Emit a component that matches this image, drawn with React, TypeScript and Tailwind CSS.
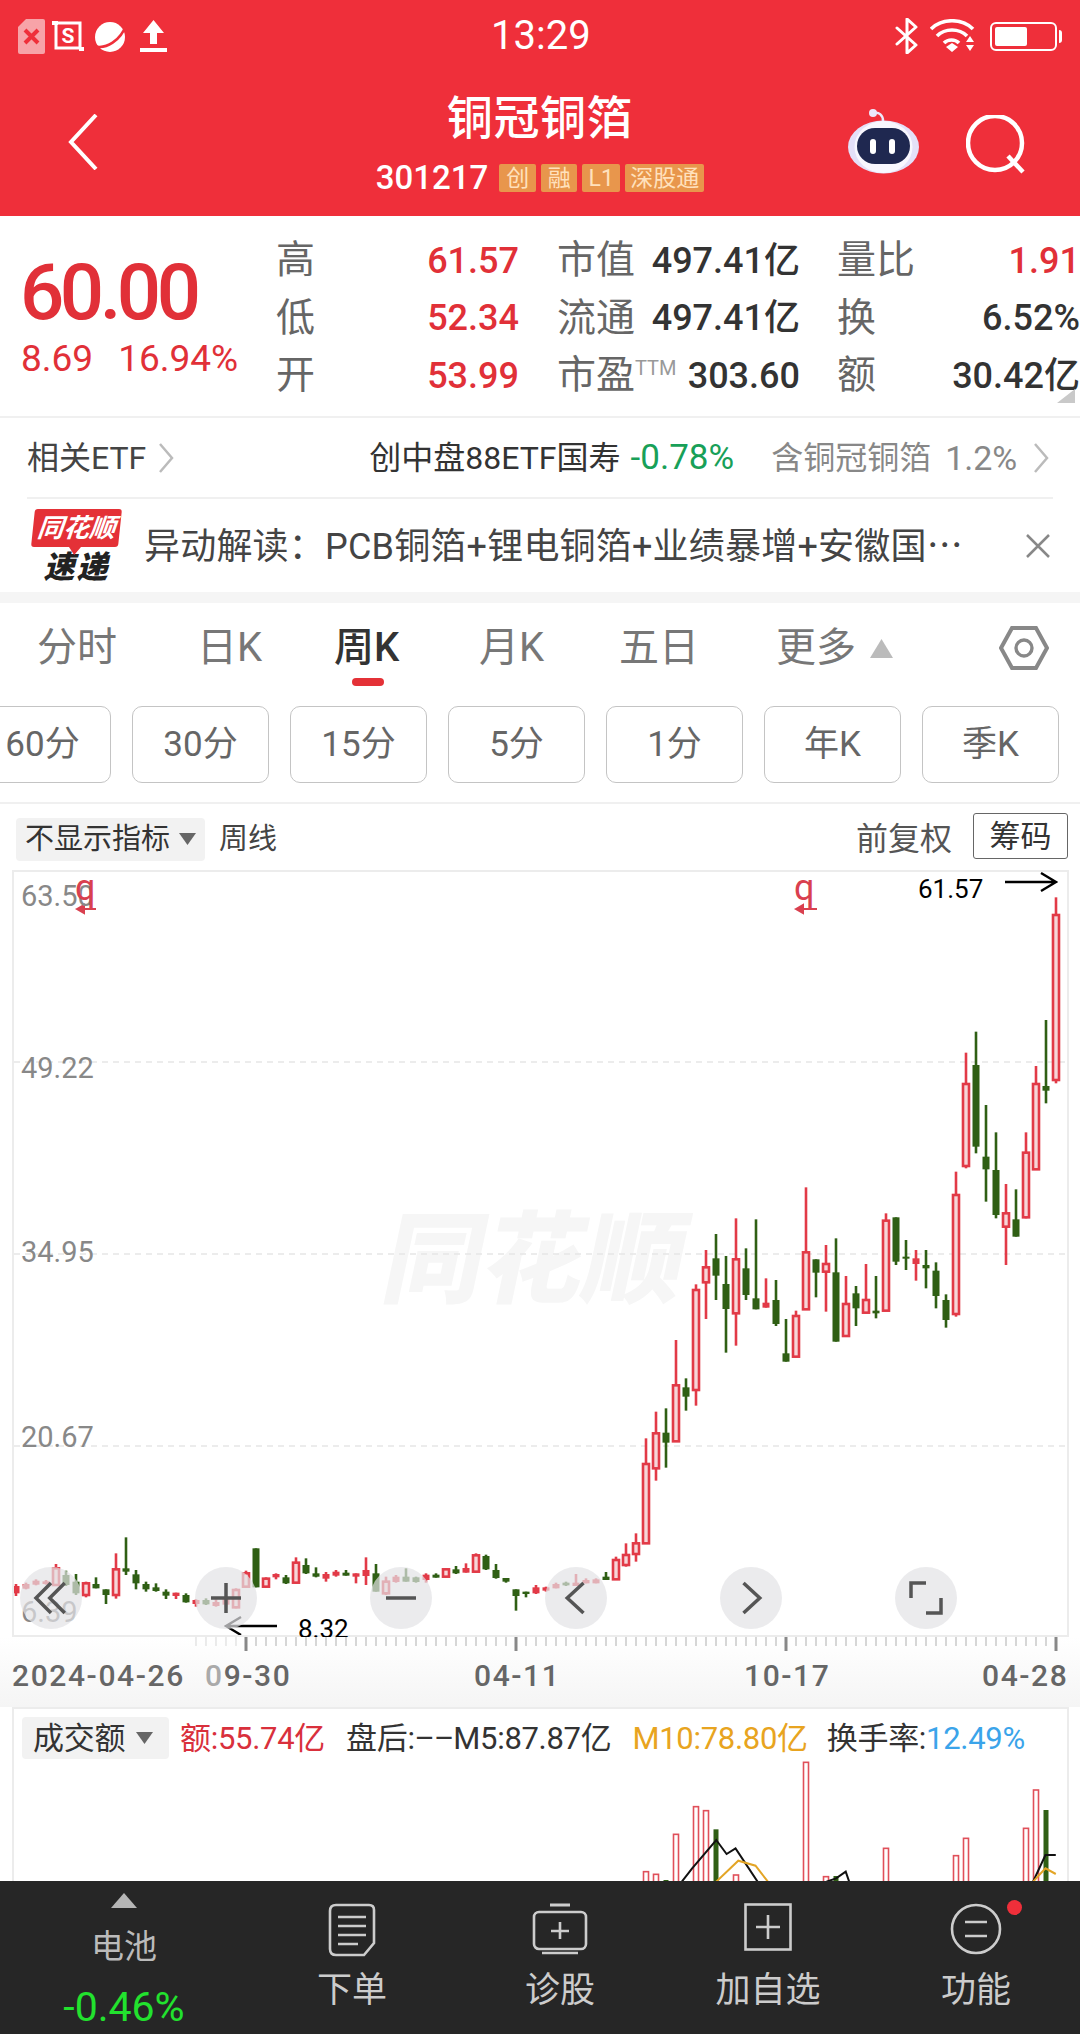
const sans = "font-[Roboto,'Noto_Sans_CJK_SC',sans-serif]";

// [high, bodyTop, bodyBottom, low, kind] r = hollow red, f = filled red, g = green
type Candle = [number, number, number, number, string];

// measured against y = 1480 + v / 3
const leftCandles: Candle[] = [
  [312, 318, 340, 348, "f"], [308, 312, 326, 328, "f"], [298, 302, 314, 316, "f"], [300, 304, 312, 314, "f"],
  [252, 265, 315, 318, "r"], [272, 285, 315, 318, "g"], [282, 305, 340, 345, "g"], [305, 310, 345, 352, "r"],
  [292, 312, 325, 325, "g"], [328, 328, 345, 372, "g"], [220, 268, 345, 356, "r"], [172, 265, 275, 285, "g"],
  [270, 283, 310, 328, "g"], [305, 312, 328, 335, "g"], [310, 322, 333, 335, "g"], [328, 335, 347, 357, "g"],
  [338, 338, 348, 357, "f"], [340, 345, 367, 368, "g"], [358, 360, 372, 380, "f"], [355, 360, 373, 375, "g"],
  [358, 366, 378, 380, "f"], [352, 356, 374, 380, "f"], [325, 330, 382, 385, "r"], [272, 280, 320, 322, "r"],
  [205, 205, 322, 322, "g"], [292, 296, 320, 322, "r"], [280, 282, 292, 298, "f"], [285, 292, 310, 312, "g"],
  [232, 248, 308, 310, "r"], [235, 255, 280, 282, "g"], [262, 280, 290, 292, "g"], [276, 282, 296, 305, "f"],
  [270, 275, 287, 290, "f"], [270, 278, 287, 287, "g"], [280, 280, 290, 310, "f"], [232, 270, 288, 315, "f"],
  [252, 280, 335, 335, "g"], [290, 305, 340, 345, "r"], [285, 290, 306, 308, "f"], [265, 290, 305, 305, "g"],
  [290, 292, 306, 308, "g"], [280, 284, 300, 308, "f"], [280, 284, 293, 293, "g"], [265, 268, 290, 292, "r"],
  [258, 268, 280, 282, "g"], [250, 264, 278, 278, "f"], [220, 226, 275, 278, "r"], [224, 228, 268, 270, "g"],
  [252, 270, 294, 296, "g"], [294, 294, 305, 308, "g"], [328, 328, 348, 392, "g"], [335, 335, 342, 352, "g"],
  [315, 322, 340, 342, "f"], [320, 322, 332, 335, "f"], [308, 312, 325, 325, "f"], [305, 308, 316, 318, "g"],
  [282, 308, 318, 318, "f"], [295, 300, 310, 310, "f"], [295, 298, 310, 310, "f"],
];

// measured against y = 1240 + v / 3
const rightCandles: Candle[] = [
  [996, 1010, 1020, 1020, "g"], [950, 960, 1018, 1018, "r"], [910, 945, 975, 980, "r"], [880, 910, 942, 965, "r"],
  [595, 672, 910, 910, "r"], [515, 580, 685, 722, "r"], [505, 578, 608, 683, "g"], [300, 436, 604, 604, "r"],
  [415, 442, 470, 512, "g"], [133, 150, 450, 497, "r"], [30, 82, 127, 237, "r"], [-18, 55, 107, 180, "g"],
  [48, 132, 207, 338, "g"], [-65, 58, 220, 317, "r"], [25, 85, 165, 180, "g"], [-62, 175, 208, 208, "g"],
  [115, 188, 203, 203, "f"], [120, 180, 252, 258, "g"], [237, 340, 365, 365, "g"], [212, 228, 350, 352, "r"],
  [-158, 37, 208, 208, "r"], [58, 58, 98, 172, "g"], [15, 72, 95, 215, "r"], [-5, 97, 305, 305, "g"],
  [108, 192, 288, 288, "r"], [138, 160, 205, 258, "g"], [72, 180, 218, 218, "r"], [108, 212, 220, 235, "g"],
  [-80, -58, 212, 212, "r"], [-68, -68, 65, 75, "g"], [0, 50, 56, 90, "g"], [30, 55, 72, 122, "f"],
  [30, 75, 85, 145, "g"], [67, 92, 168, 205, "g"], [163, 180, 240, 263, "g"], [-205, -135, 222, 230, "r"],
  [-562, -468, -222, -215, "r"], [-625, -525, -280, -260, "g"], [-405, -250, -212, -115, "g"], [-323, -210, -75, -65, "g"],
  [-168, -80, -40, 75, "r"], [-152, -62, -10, -10, "g"], [-323, -262, -68, -65, "r"], [-522, -468, -212, -212, "r"],
  [-660, -462, -448, -410, "g"], [-1028, -975, -480, -470, "r"],
];

const RED = "#e23a47";
const GREEN = "#2f5f14";

function CandleMark({ x, c, base }: { x: number; c: Candle; base: number }) {
  const [h, t, b, l, kind] = c;
  const y = (v: number) => base + v / 3;
  const color = kind === "g" ? GREEN : RED;
  return (
    <g>
      <line x1={x} x2={x} y1={y(h)} y2={y(l)} stroke={color} strokeWidth={2.6} />
      {kind === "r" ? (
        <rect x={x - 3} y={y(t)} width={6} height={Math.max(y(b) - y(t), 2)} fill="#f7d5d8" stroke={color} strokeWidth={2.6} />
      ) : (
        <rect x={x - 3.5} y={y(t)} width={7} height={Math.max(y(b) - y(t), 2)} fill={color} />
      )}
    </g>
  );
}

const volBars: [number, number, string][] = [
  [646, 515, "r"], [656, 523, "r"], [666, 540, "g"], [676, 403, "r"], [696, 320, "r"], [706, 332, "r"],
  [716, 388, "g"], [736, 525, "r"], [806, 187, "r"], [826, 530, "r"], [836, 528, "g"], [886, 445, "r"],
  [956, 467, "r"], [966, 415, "r"], [1026, 385, "r"], [1036, 270, "r"], [1046, 330, "g"],
];

function zy(v: number) {
  return 1700 + v / 3;
}
function pts(list: [number, number][]) {
  return list.map(([x, y]) => `${x / 1.452},${zy(y)}`).join(" ");
}

function Tri({ up, className }: { up?: boolean; className: string }) {
  return (
    <svg viewBox="0 0 20 16" preserveAspectRatio="none" className={className}>
      <polygon points={up ? "10,0 20,16 0,16" : "0,0 20,0 10,16"} fill="currentColor" />
    </svg>
  );
}

function StatusBar() {
  return (
    <div className="flex h-[72px] items-center text-white">
      <svg viewBox="0 0 27 35" className="ml-[18px] h-[35px] w-[27px]">
        <path d="M8 0h17q2 0 2 2v31q0 2-2 2H2q-2 0-2-2V8z" fill="#f7a3a8" />
        <path d="M7 11l13 13M20 11L7 24" stroke="#ef2f3a" strokeWidth="4" />
      </svg>
      <svg viewBox="0 0 32 34" className="ml-[7px] h-[34px] w-[32px]">
        <path d="M4 4h24v25H4z" fill="none" stroke="#fff" strokeWidth="3" />
        <path d="M0 2h6v4H0zM27 28h5v4h-5z" fill="#fff" />
        <text x="16" y="24" textAnchor="middle" fontSize="21" fontWeight="700" fill="#fff" fontFamily="Roboto">S</text>
      </svg>
      <svg viewBox="0 0 35 35" className="ml-[9px] h-[35px] w-[35px]">
        <circle cx="17" cy="18" r="15" fill="#fff" />
        <path d="M1 27c12 4 27-6 32-21" fill="none" stroke="#ef2f3a" strokeWidth="2.5" />
      </svg>
      <svg viewBox="0 0 27 32" className="ml-[12px] h-[32px] w-[27px]">
        <path d="M13.5 0L24 13h-7v11h-7V13H3zM0 28h27v4H0z" fill="#fff" />
      </svg>
      <div className="ml-[324px] w-[98px] text-center text-[40px] leading-none">13:29</div>
      <svg viewBox="0 0 24 36" className="ml-[306px] h-[36px] w-[24px]">
        <path d="M2 10l19 17-9 8V1l9 8L2 26" fill="none" stroke="#fff" strokeWidth="3" strokeLinecap="round" strokeLinejoin="round" />
      </svg>
      <svg viewBox="0 0 46 34" className="ml-[11px] h-[34px] w-[46px]">
        <path d="M1 10c11-11 31-11 42 0M7 17c8-8 22-8 30 0M14 24c4-4 11-4 15 0" fill="none" stroke="#fff" strokeWidth="3.6" />
        <path d="M16 28l6-4 6 4-6 5zM40 17l4 6h-8zM40 32l4-6h-8z" fill="#fff" />
      </svg>
      <div className="ml-[14px] flex h-[29px] w-[67px] items-center rounded-[6px] border-2 border-white p-[3px]">
        <div className="h-full w-[32px] rounded-[2px] bg-white" />
      </div>
      <div className="ml-[2px] h-[13px] w-[3px] rounded-r-sm bg-white" />
    </div>
  );
}

function Badge({ label, w }: { label: string; w: string }) {
  return (
    <span className={`flex h-[28px] items-center justify-center rounded-[2px] bg-[#e8964c] text-[23px] leading-none text-[#ffe1bd] ${w}`}>
      {label}
    </span>
  );
}

function Header() {
  return (
    <div className="h-[216px] bg-[#ef2f3a] text-white">
      <StatusBar />
      <div className="flex h-[144px]">
        <div className="w-[340px] pl-[68px]">
          <svg viewBox="0 0 30 56" className="mt-[42px] h-[56px] w-[30px]">
            <path d="M28 1L3 28l25 27" fill="none" stroke="#fff" strokeWidth="4" />
          </svg>
        </div>
        <div className="flex w-[400px] flex-col items-center pt-[19px]">
          <div className="text-[46px] leading-[54px] font-medium tracking-[0.6px]">铜冠铜箔</div>
          <div className="mt-[18px] flex items-center gap-[5px]">
            <span className="mr-[6px] text-[33px] leading-[30px] font-medium">301217</span>
            <Badge label="创" w="w-[37px]" />
            <Badge label="融" w="w-[36px]" />
            <Badge label="L1" w="w-[38px]" />
            <Badge label="深股通" w="w-[79px]" />
          </div>
        </div>
        <svg viewBox="0 0 74 66" className="ml-[107px] mt-[36px] h-[66px] w-[74px]">
          <path d="M27 5c5-1 9 2 9 8" fill="none" stroke="#ece8fb" strokeWidth="2.5" />
          <circle cx="26" cy="5" r="4" fill="#ece8fb" />
          <ellipse cx="36.5" cy="39" rx="35.5" ry="26.5" fill="#e4e0f8" />
          <ellipse cx="36.5" cy="39" rx="29" ry="26" fill="#f8f7fe" />
          <rect x="10" y="20" width="53" height="36" rx="18" fill="#1f2850" />
          <rect x="23" y="31" width="6" height="15" rx="3" fill="#fff" />
          <rect x="42" y="31" width="6" height="15" rx="3" fill="#fff" />
        </svg>
        <svg viewBox="0 0 62 60" className="ml-[45px] mt-[43px] h-[60px] w-[62px]">
          <circle cx="29" cy="28" r="27" fill="none" stroke="#fff" strokeWidth="4.5" />
          <path d="M42 41l15 16" stroke="#fff" strokeWidth="4.5" />
        </svg>
      </div>
    </div>
  );
}

function Stat({ label, value, valueClass }: { label: React.ReactNode; value: string; valueClass: string }) {
  return (
    <div className="flex h-[57.5px] items-center justify-between">
      <span className="text-[39px] leading-none text-[#666]">{label}</span>
      <span className={`text-[36px] leading-none font-medium ${valueClass}`}>{value}</span>
    </div>
  );
}

function Quote() {
  return (
    <div className="relative flex h-[202px] border-b-2 border-[#f0f0f0] pt-[16px]">
      <div className="w-[276px] shrink-0 pl-[20px] pt-[26px] text-[#e13038]">
        <div className="text-[78px] leading-[70px] font-medium tracking-[-4.5px]">60.00</div>
        <div className="mt-[12px] ml-[1px] flex gap-[25px] text-[37px] leading-none">
          <span>8.69</span>
          <span>16.94%</span>
        </div>
      </div>
      <div className="w-[243px] shrink-0">
        <Stat label="高" value="61.57" valueClass="text-[#e13038]" />
        <Stat label="低" value="52.34" valueClass="text-[#e13038]" />
        <Stat label="开" value="53.99" valueClass="text-[#e13038]" />
      </div>
      <div className="ml-[38px] w-[243px] shrink-0">
        <Stat label="市值" value="497.41亿" valueClass="text-[#333]" />
        <Stat label="流通" value="497.41亿" valueClass="text-[#333]" />
        <Stat
          label={
            <span className="flex items-start">
              市盈<span className="mt-[2px] text-[20px] leading-none text-[#999]">TTM</span>
            </span>
          }
          value="303.60"
          valueClass="text-[#333]"
        />
      </div>
      <div className="ml-[37px] w-[243px] shrink-0">
        <Stat label="量比" value="1.91" valueClass="text-[#e13038]" />
        <Stat label="换" value="6.52%" valueClass="text-[#333]" />
        <Stat label="额" value="30.42亿" valueClass="text-[#333]" />
      </div>
      <div className="absolute right-[5px] bottom-[13px] h-0 w-0 border-b-[14px] border-l-[18px] border-b-[#c9c9c9] border-l-transparent" />
    </div>
  );
}

function Chevron({ className }: { className: string }) {
  return (
    <svg viewBox="0 0 16 30" className={className}>
      <path d="M2 1l12 14L2 29" fill="none" stroke="#bbb" strokeWidth="2.5" />
    </svg>
  );
}

function EtfRow() {
  return (
    <div className="mx-[27px] flex h-[81px] items-center border-b-2 border-[#f0f0f0] text-[32px] leading-none">
      <span className="text-[#444]">相关ETF</span>
      <Chevron className="ml-[12px] h-[30px] w-[16px]" />
      <span className="ml-[195px] text-[#333]">创中盘88ETF国寿</span>
      <span className="ml-[10px] text-[35px] text-[#18a058]">-0.78%</span>
      <span className="ml-[37px] text-[#888]">含铜冠铜箔</span>
      <span className="ml-[14px] text-[34px] text-[#888]">1.2%</span>
      <Chevron className="ml-[16px] h-[30px] w-[16px]" />
    </div>
  );
}

function NewsRow() {
  return (
    <div className="flex h-[93px] items-center">
      <div className="ml-[33px] w-[87px] shrink-0 text-center italic">
        <div className="relative mb-[6px] flex h-[38px] -skew-x-6 items-center justify-center rounded-[3px] bg-[#e43137] text-[26px] leading-none font-bold text-white">
          同花顺
          <span className="absolute -bottom-[8px] left-[38px] h-0 w-0 border-x-[6px] border-t-[8px] border-x-transparent border-t-[#e43137]" />
        </div>
        <div className="text-[31px] leading-[30px] font-black tracking-[2px] text-[#222]">速递</div>
      </div>
      <div className="ml-[24px] w-[826px] shrink-0 pt-[2px] text-[36px] leading-none tracking-[0.2px] whitespace-nowrap text-[#444]">
        异动解读：PCB铜箔+锂电铜箔+业绩暴增+安徽国⋯
      </div>
      <svg viewBox="0 0 24 24" className="ml-[56px] h-[24px] w-[24px]">
        <path d="M1 1l22 22M23 1L1 23" stroke="#888" strokeWidth="2.5" />
      </svg>
    </div>
  );
}

function Tabs() {
  return (
    <div className="flex h-[92px] items-center pl-[37px] pb-[2px] text-[40px] leading-none text-[#777]">
      <span className="w-[160px]">分时</span>
      <span className="w-[137px]">日K</span>
      <span className="relative w-[145px] font-medium text-[#333]">
        周K
        <span className="absolute top-[50px] left-[18px] h-[8px] w-[32px] rounded-full bg-[#e43137]" />
      </span>
      <span className="w-[140px]">月K</span>
      <span className="w-[157px]">五日</span>
      <span>更多</span>
      <Tri up className="ml-[14px] h-[19px] w-[23px] text-[#bbb]" />
      <svg viewBox="0 0 50 46" className="ml-[106px] h-[46px] w-[50px]">
        <path d="M2 23L13 3h24l11 20-11 20H13z" fill="none" stroke="#888" strokeWidth="4" />
        <circle cx="25" cy="23" r="8" fill="none" stroke="#888" strokeWidth="3.4" />
      </svg>
    </div>
  );
}

function PeriodButtons() {
  const labels = ["60分", "30分", "15分", "5分", "1分", "年K", "季K"];
  return (
    <div className="mt-[11px] -ml-[26px] flex gap-[21px]">
      {labels.map((label) => (
        <div
          key={label}
          className="flex h-[77px] w-[137px] shrink-0 items-center justify-center rounded-[10px] border border-[#c4c4c4] text-[35px] leading-none text-[#666]"
        >
          {label}
        </div>
      ))}
    </div>
  );
}

function ChartToolbar() {
  return (
    <div className="mt-[19px] flex h-[68px] items-center border-t-2 border-[#f0f0f0] pt-[4px] pl-[16px]">
      <div className="flex h-[43px] w-[189px] items-center rounded-[4px] bg-[#f2f2f2] pl-[9px] text-[29px] leading-none text-[#333]">
        不显示指标
        <Tri className="ml-[9px] h-[12px] w-[17px] text-[#666]" />
      </div>
      <span className="ml-[14px] text-[29px] leading-none text-[#444]">周线</span>
      <span className="ml-[579px] text-[32px] leading-none text-[#555]">前复权</span>
      <div className="-mt-[6px] ml-[21px] flex h-[46px] w-[95px] items-center justify-center rounded-[3px] border border-[#666] text-[31px] leading-none text-[#333]">
        筹码
      </div>
    </div>
  );
}

function CircleBtn({ children, className }: { children: React.ReactNode; className: string }) {
  return (
    <div className={`absolute top-[695px] flex h-[62px] w-[62px] items-center justify-center rounded-full bg-[#e3e3e6]/70 ${className}`}>
      <svg viewBox="0 0 40 40" className="h-[50px] w-[50px]" fill="none" stroke="#555" strokeWidth="2.8">
        {children}
      </svg>
    </div>
  );
}

function PriceChart() {
  return (
    <div className="relative mx-[12px] h-[767px] w-[1057px] border-2 border-[#ececec]">
      <div className="absolute top-[339px] left-[372px] -skew-x-12 text-[100px] leading-none font-black text-[#f6f6f6]">同花顺</div>
      <svg viewBox="14 872 1053 763" className="absolute inset-0 h-[763px] w-[1053px]">
        {[1062, 1254, 1446].map((y) => (
          <line key={y} x1="14" x2="1067" y1={y} y2={y} stroke="#e6e6e6" strokeWidth="1.5" strokeDasharray="6 5" />
        ))}
        {leftCandles.map((c, i) => (
          <CandleMark key={i} x={16 + 10 * i} c={c} base={1480} />
        ))}
        {rightCandles.map((c, i) => (
          <CandleMark key={i} x={606 + 10 * i} c={c} base={1240} />
        ))}
        <path d="M77 909h19M77 909l7-4v8zM796 909h21M796 909l7-4v8z" stroke="#d9404f" strokeWidth="2" fill="#d9404f" />
        <path d="M1005 882h50M1041 873l15 9-15 9" fill="none" stroke="#000" strokeWidth="2.4" />
        <path d="M226 1626h51M241 1617l-15 9 15 9" fill="none" stroke="#000" strokeWidth="2.4" />
      </svg>
      <span className="absolute top-[10px] left-[7px] text-[29px] leading-none text-[#888]">63.50</span>
      <span className="absolute top-[182px] left-[7px] text-[29px] leading-none text-[#888]">49.22</span>
      <span className="absolute top-[366px] left-[7px] text-[29px] leading-none text-[#888]">34.95</span>
      <span className="absolute top-[551px] left-[7px] text-[29px] leading-none text-[#888]">20.67</span>
      <span className="absolute top-[726px] left-[7px] text-[29px] leading-none text-[#888]">6.39</span>
      <span className="absolute -top-[2px] left-[61px] text-[36px] leading-none text-[#d9404f]">q</span>
      <span className="absolute -top-[2px] left-[780px] text-[36px] leading-none text-[#d9404f]">q</span>
      <span className="absolute top-[4px] left-[904px] text-[26px] leading-none text-black">61.57</span>
      <span className="absolute top-[744px] left-[284px] text-[26px] leading-none text-black">8.32</span>
      <CircleBtn className="left-[6px]">
        <path d="M20 8L8 20l12 12M31 8L19 20l12 12" />
      </CircleBtn>
      <CircleBtn className="left-[181px]">
        <path d="M8 20h24M20 8v24" />
      </CircleBtn>
      <CircleBtn className="left-[356px]">
        <path d="M8 20h24" />
      </CircleBtn>
      <CircleBtn className="left-[531px]">
        <path d="M26 8L13 20l13 12" />
      </CircleBtn>
      <CircleBtn className="left-[706px]">
        <path d="M14 8l13 12-13 12" />
      </CircleBtn>
      <CircleBtn className="left-[881px]">
        <path d="M8 20V8h12M32 20v12H20" />
      </CircleBtn>
    </div>
  );
}

function TimeAxis() {
  const ticks = Array.from({ length: 87 }, (_, i) => 196 + 10 * i);
  return (
    <div className="relative h-[70px] bg-linear-to-b from-white to-[#f5f5f5]">
      <svg viewBox="0 0 1080 16" className="absolute top-0 left-0 h-[16px] w-[1080px]">
        {ticks.map((x) => {
          const major = x === 246 || x === 516 || x === 786 || x === 1056;
          return (
            <line
              key={x}
              x1={x}
              x2={x}
              y1={0}
              y2={major ? 14 : 9}
              stroke={major ? "#888" : x < 246 ? "#ddd" : "#bbb"}
              strokeWidth={major ? 3 : 1.2}
            />
          );
        })}
      </svg>
      <div className="flex pt-[24px] text-[30px] leading-none font-medium text-[#666]">
        <span className="ml-[12px] w-[193px] tracking-[1.6px]">2024-04-26</span>
        <span className="w-[269px] tracking-[1.6px]">
          <span className="text-[#aaa]">0</span>9-30
        </span>
        <span className="w-[270px] tracking-[1.6px]">04-11</span>
        <span className="w-[238px] tracking-[1.6px]">10-17</span>
        <span className="tracking-[1.6px]">04-28</span>
      </div>
    </div>
  );
}

function VolumePanel() {
  return (
    <div className="relative mx-[12px] h-[174px] w-[1057px] overflow-hidden border-x-2 border-t-2 border-[#ececec]">
      <svg viewBox="14 1709 1053 172" className="absolute inset-0 h-[172px] w-[1053px]">
        {volBars.map(([x, top, kind]) =>
          kind === "g" ? (
            <rect key={x} x={x - 2.5} y={zy(top)} width={5} height={1881 - zy(top)} fill={GREEN} />
          ) : (
            <rect key={x} x={x - 2.5} y={zy(top)} width={5} height={1885 - zy(top)} fill="#fff" stroke="#e0505a" strokeWidth={1.6} />
          ),
        )}
        <polyline points={pts([[990, 545], [1005, 505], [1040, 420], [1055, 462], [1068, 445], [1100, 545]])} fill="none" stroke="#111" strokeWidth="2" />
        <polyline points={pts([[1200, 545], [1214, 535], [1228, 515], [1233, 545]])} fill="none" stroke="#111" strokeWidth="2" />
        <polyline points={pts([[1500, 545], [1518, 465], [1533, 465]])} fill="none" stroke="#111" strokeWidth="2" />
        <polyline points={pts([[1040, 545], [1072, 482], [1097, 497], [1115, 545]])} fill="none" stroke="#e3a526" strokeWidth="2" />
        <polyline points={pts([[1500, 545], [1518, 505], [1533, 522]])} fill="none" stroke="#e3a526" strokeWidth="2" />
      </svg>
      <div className="relative flex h-[50px] items-center whitespace-nowrap pl-[8px] pt-[8px] text-[31px] leading-none tracking-[-0.3px]">
        <div className="flex h-[42px] w-[147px] items-center rounded-[4px] bg-[#f2f2f2] pl-[11px] text-[#333]">
          成交额
          <Tri className="ml-[11px] h-[12px] w-[17px] text-[#666]" />
        </div>
        <span className="ml-[11px] text-[#d9303c]">额:55.74亿</span>
        <span className="ml-[21px] text-[#333]">
          盘后:<span className="tracking-[-1px]">––</span>M5:87.87亿
        </span>
        <span className="ml-[21px] text-[#e8a420]">M10:78.80亿</span>
        <span className="ml-[19px] text-[#333]">换手率:</span>
        <span className="text-[#3ba4ea]">12.49%</span>
      </div>
    </div>
  );
}

function NavItem({ label, children }: { label: string; children: React.ReactNode }) {
  return (
    <div className="flex w-[208px] flex-col items-center pt-[22px]">
      <div className="relative flex h-[58px] items-start justify-center">{children}</div>
      <span className="mt-[12px] text-[35px] leading-none text-[#ccc]">{label}</span>
    </div>
  );
}

function BottomBar() {
  return (
    <div className="flex h-[153px] bg-[#262626] pl-[20px]">
      <div className="mr-[20px] flex w-[208px] flex-col items-center pt-[12px]">
        <Tri up className="h-[15px] w-[26px] text-[#b5b5b5]" />
        <span className="mt-[22px] text-[33px] leading-none text-[#bbb]">电池</span>
        <span className="mt-[24px] text-[41px] leading-none text-[#22e22e]">-0.46%</span>
      </div>
      <NavItem label="下单">
        <svg viewBox="0 0 48 54" className="h-[54px] w-[48px]" fill="none" stroke="#ccc" strokeWidth="2.6">
          <path d="M8 2h33q5 0 5 5v33L36 52H8q-6 0-6-6V8q0-6 6-6z" />
          <path d="M10 14h28M10 23h28M10 32h28M10 41h20" />
        </svg>
      </NavItem>
      <NavItem label="诊股">
        <svg viewBox="0 0 56 52" className="h-[52px] w-[56px]" fill="none" stroke="#ccc" strokeWidth="2.6">
          <path d="M18 2h20" strokeWidth="3" />
          <rect x="2" y="9" width="52" height="37" rx="5" />
          <path d="M10 50h36M28 19v17M19 28h18" />
        </svg>
      </NavItem>
      <NavItem label="加自选">
        <svg viewBox="0 0 48 48" className="h-[48px] w-[48px]" fill="none" stroke="#ccc" strokeWidth="2.6">
          <rect x="1.5" y="1.5" width="45" height="45" />
          <path d="M24 12v24M12 24h24" />
        </svg>
      </NavItem>
      <NavItem label="功能">
        <svg viewBox="0 0 52 52" className="h-[52px] w-[52px]" fill="none" stroke="#ccc" strokeWidth="2.6">
          <circle cx="26" cy="26" r="24" />
          <path d="M15 19h22M15 33h22" />
        </svg>
        <span className="absolute -top-[3px] -right-[20px] h-[15px] w-[15px] rounded-full bg-[#ef2f3a]" />
      </NavItem>
    </div>
  );
}

export default function App() {
  return (
    <div className={`h-[2034px] w-[1080px] overflow-hidden bg-white ${sans}`}>
      <Header />
      <Quote />
      <EtfRow />
      <NewsRow />
      <div className="h-[11px] bg-[#f5f5f5]" />
      <Tabs />
      <PeriodButtons />
      <ChartToolbar />
      <PriceChart />
      <TimeAxis />
      <VolumePanel />
      <BottomBar />
    </div>
  );
}
